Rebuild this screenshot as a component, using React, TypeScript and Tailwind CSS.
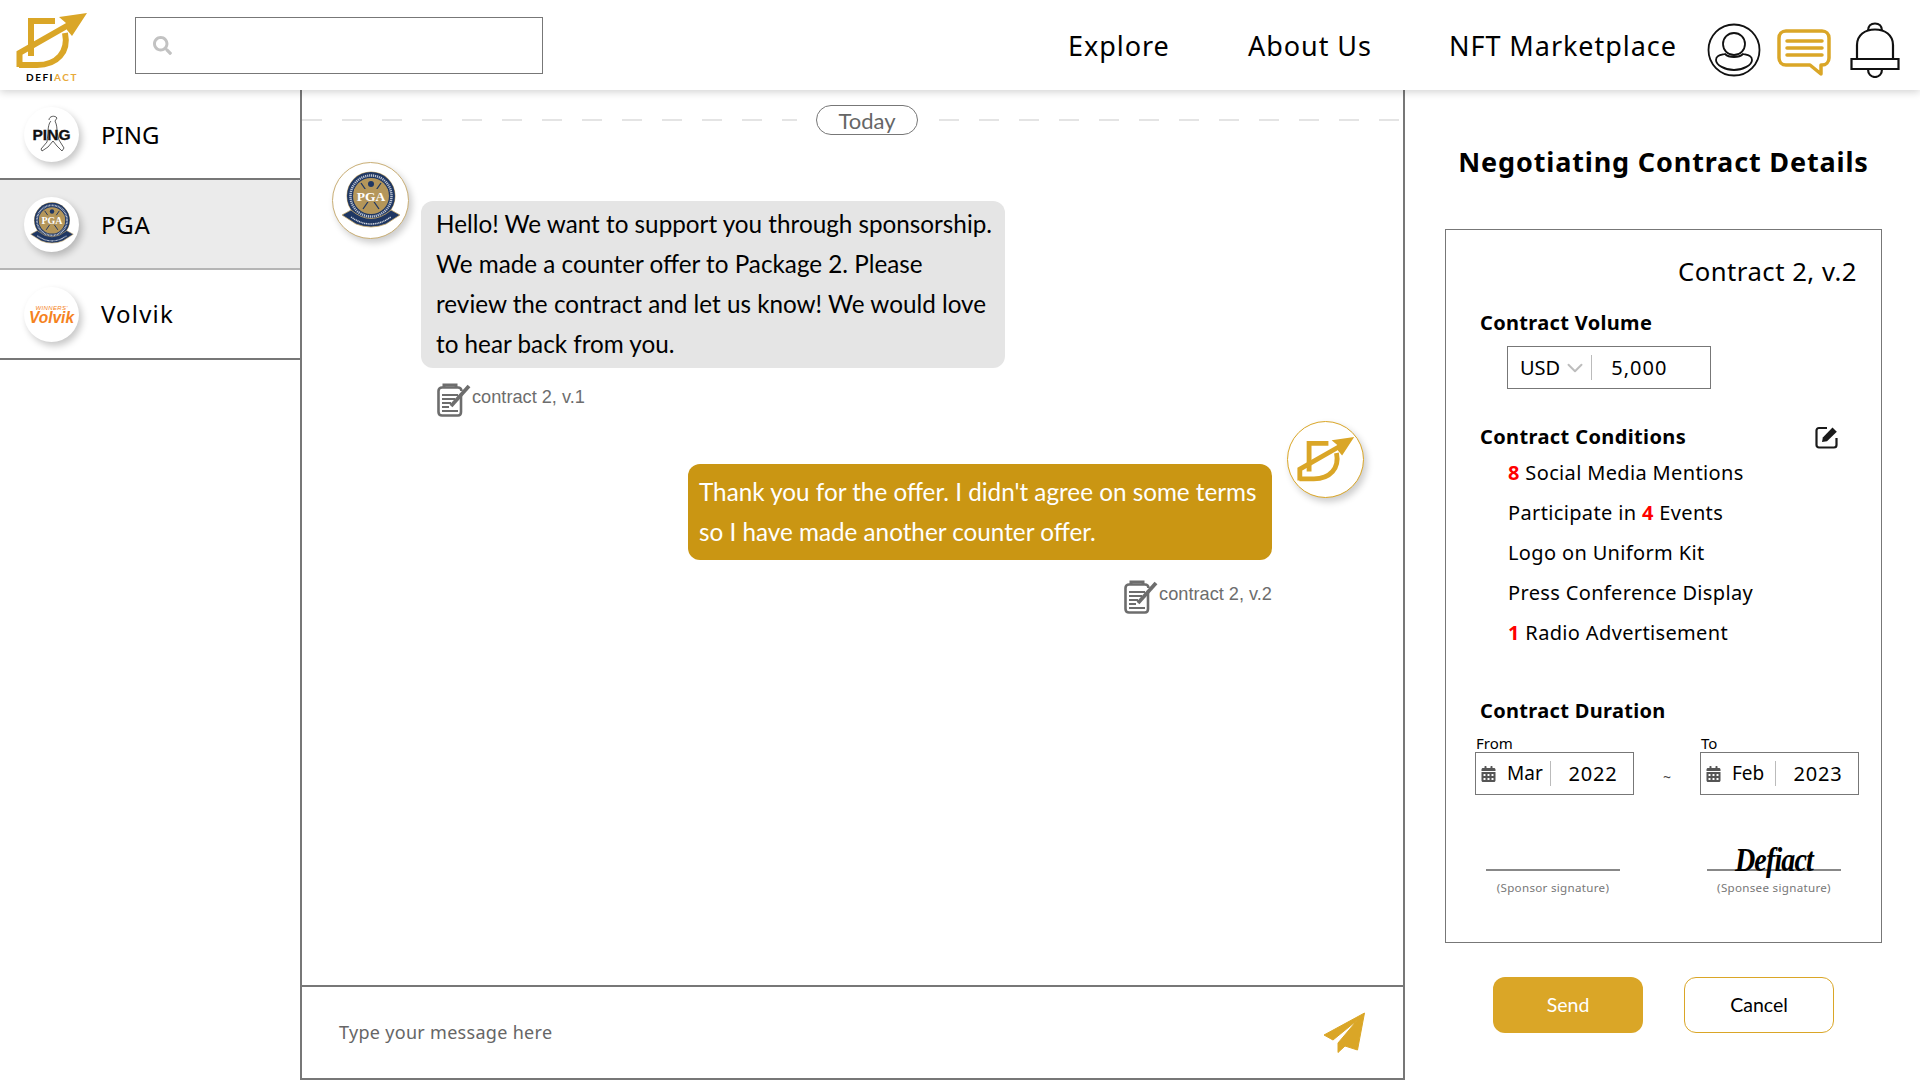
import React from "react";
import { FaSearch, FaCalendarAlt } from "react-icons/fa";
import { ChevronDown } from "lucide-react";

const GOLD = "#daa627";

function LogoMark({ className }: { className?: string }) {
  return (
    <svg viewBox="16 12 72 58" className={className} fill="none">
      <path d="M31 56V21H55" stroke={GOLD} strokeWidth="6" />
      <path d="M65 33C69 52 57 65 37 65H19" stroke={GOLD} strokeWidth="6" />
      <path d="M19.500 67V53L72 23" stroke={GOLD} strokeWidth="6" />
      <path d="M87 13L59 17L66 23L67 30L72 36Z" fill={GOLD} />
    </svg>
  );
}

function PgaBadge({ className }: { className?: string }) {
  return (
    <svg viewBox="0 0 60 60" className={className}>
      <circle cx="30" cy="25" r="24.500" fill="#c6a96b" />
      <circle cx="30" cy="25" r="24" fill="#1f3763" />
      <circle cx="30" cy="25" r="20.500" fill="none" stroke="#fff" strokeWidth="2.500" strokeDasharray="1.200 0.800" opacity="0.700" />
      <circle cx="30" cy="25" r="18" fill="#b4965a" />
      <path d="M20 12L38 38M40 12L22 38" stroke="#1f3763" strokeWidth="1.300" />
      <circle cx="30" cy="13" r="3" fill="#1f3763" />
      <rect x="13" y="18" width="34" height="13" fill="#b4965a" />
      <text x="30" y="29.500" textAnchor="middle" fontFamily="Liberation Serif" fontWeight="700" fontSize="13.500" fill="#fff">PGA</text>
      <path d="M1 44L10 39Q30 56 50 39L59 44L45 53Q30 59 15 53Z" fill="#1f3763" stroke="#c6a96b" strokeWidth="0.800" />
      <path d="M10 46Q30 60 50 46" fill="none" stroke="#fff" strokeWidth="1.500" strokeDasharray="1.200 0.600" opacity="0.800" />
    </svg>
  );
}

function PingLogo() {
  return (
    <svg viewBox="0 0 55 55" className="w-[55px] h-[55px]">
      <path d="M25 13C25 9 31 8 33 11L31 14C33 18 33 22 33 25L35 33L40 41L38 44L33 39L29 34L24 40L18 44L17 42L23 35L24 26C24 20 25 16 27 14" fill="#fff" stroke="#333" strokeWidth="0.800" />
      <text x="27.500" y="32.500" textAnchor="middle" fontFamily="Liberation Sans" fontWeight="700" fontSize="14" textLength="38" lengthAdjust="spacingAndGlyphs" fill="#111" stroke="#111" strokeWidth="0.300">PING</text>
    </svg>
  );
}

function VolvikLogo() {
  return (
    <svg viewBox="0 0 55 55" className="w-[55px] h-[55px]">
      <text x="27.500" y="23" textAnchor="middle" fontFamily="Liberation Sans" fontStyle="italic" fontSize="6" fill="#f58220" textLength="32">WINNERS'</text>
      <text x="27.500" y="36" textAnchor="middle" fontFamily="Liberation Sans" fontStyle="italic" fontWeight="700" fontSize="17" fill="#f58220" textLength="45" lengthAdjust="spacingAndGlyphs">Volvik</text>
    </svg>
  );
}

function ContractIcon() {
  return (
    <svg viewBox="0 0 34 34" className="w-[34px] h-[34px] shrink-0" fill="none" stroke="#6d6d6d">
      <path d="M24 12V29C24 31.500 23 32.500 21 32.500H5C3 32.500 1.500 31.500 1.500 29V8C1.500 6 3 4.500 5 4.500H21C23 4.500 24.500 6 24.500 8" strokeWidth="2.600" />
      <path d="M7 4V2H19V4" strokeWidth="3" />
      <path d="M5 12H21M5 16H18M5 20H14M5 24H12M5 28H21" strokeWidth="1.800" />
      <path d="M14 23L32 3" strokeWidth="3.800" />
    </svg>
  );
}

function EditIcon() {
  return (
    <svg viewBox="0 0 24 24" className="w-[24px] h-[24px]" fill="none">
      <path d="M21.500 13V20C21.500 21.500 20.500 22.500 19 22.500H4C2.500 22.500 1.500 21.500 1.500 20V5.500C1.500 4 2.500 3 4 3H12" stroke="#1a1a1a" strokeWidth="2.200" />
      <path d="M7 17L7.800 12.500L17.500 2.500L21.800 6.800L12 16.300Z" fill="#1a1a1a" />
    </svg>
  );
}

function UserIcon() {
  return (
    <svg viewBox="0 0 54 54" className="w-[54px] h-[54px]" fill="none" stroke="#111" strokeWidth="1.500">
      <circle cx="27" cy="27" r="25.500" strokeWidth="1.800" />
      <circle cx="27" cy="21" r="11" strokeWidth="1.800" />
      <path d="M9 37C9 32 14 32 18 31C22 35 32 35 36 31C40 32 45 32 45 37C45 42 36 47 27 47C18 47 9 42 9 37Z" strokeWidth="1.800" />
    </svg>
  );
}

function ChatIcon() {
  return (
    <svg viewBox="0 0 54 48" className="w-[54px] h-[48px]" fill="none" stroke={GOLD}>
      <path d="M9 2H45C49 2 52 5 52 9V29C52 33 49 36 45 36H44V45L33 36H9C5 36 2 33 2 29V9C2 5 5 2 9 2Z" strokeWidth="3.500" strokeLinejoin="round" />
      <path d="M10 12H45M10 19H45M10 26H45" strokeWidth="3.500" strokeLinecap="round" />
    </svg>
  );
}

function BellIcon() {
  return (
    <svg viewBox="0 0 50 56" className="w-[50px] h-[56px]" fill="none" stroke="#111" strokeWidth="2.200">
      <path d="M18 9C18 4 21 1.500 25 1.500C29 1.500 32 4 32 9" />
      <path d="M7 37V23C7 13 15 7.500 25 7.500C35 7.500 43 13 43 23V37" />
      <path d="M1.500 37H48.500V47H1.500Z" />
      <path d="M18 47C18 52 21 55 25 55C29 55 32 52 32 47" />
    </svg>
  );
}

function SendIcon() {
  return (
    <svg viewBox="0 0 41 41" className="w-[41px] h-[41px]">
      <path d="M40.500 1L33.500 38L21 34L14 40.500V31L33.500 8L9 28L0 23Z" fill={GOLD} stroke={GOLD} strokeWidth="1" strokeLinejoin="round" />
    </svg>
  );
}

function SidebarRow({ name, active, border, nameClass, children }: { name: string; active?: boolean; border: string; nameClass: string; children: React.ReactNode }) {
  return (
    <div className={`h-[90px] flex items-center pl-[24px] border-b-2 ${border} ${active ? "bg-[#ebebeb]" : "bg-white"}`}>
      <div className="w-[55px] h-[55px] rounded-full bg-white flex items-center justify-center shadow-[3px_4px_7px_rgba(0,0,0,0.22)]">{children}</div>
      <span className={`ml-[22px] text-[24px] text-black ${nameClass}`}>{name}</span>
    </div>
  );
}

function Dashes({ className }: { className: string }) {
  return <div className={`h-[2px] bg-[repeating-linear-gradient(90deg,#e4e4e4_0,#e4e4e4_20px,transparent_20px,transparent_40px)] ${className}`} />;
}

function DateBox({ label, month, year }: { label: string; month: string; year: string }) {
  return (
    <div>
      <div className="text-[15px] leading-[18px] text-black pl-[1px]">{label}</div>
      <div className="w-[159px] h-[43px] border border-[#777] flex items-center text-[20px]">
        <FaCalendarAlt className="text-[#555] ml-[5px] w-[15px] h-[16px] shrink-0" />
        <span className="w-[54px] pl-[11px] text-[19px] shrink-0">{month}</span>
        <span className="w-px h-[25px] bg-[#bbb] shrink-0" />
        <span className="flex-1 text-center tracking-[0.8px] pl-[2px]">{year}</span>
      </div>
    </div>
  );
}

function Signature({ label, children }: { label: string; children?: React.ReactNode }) {
  return (
    <div className="w-[134px] flex flex-col items-center">
      <div className="h-[40px] w-full flex items-end justify-center leading-[1] border-b-[2px] border-[#888]">{children}</div>
      <div className="text-[11.600px] text-[#777] mt-[8px] tracking-[0.3px] whitespace-nowrap">{label}</div>
    </div>
  );
}

export default function App() {
  return (
    <div className="w-[1920px] h-[1080px] overflow-hidden bg-white flex flex-col font-['Noto_Sans',sans-serif] text-black">
      <header className="relative z-10 h-[90px] shrink-0 bg-white shadow-[0_2px_8px_rgba(0,0,0,0.18)] flex items-center">
        <div className="w-[135px] pl-[16px] shrink-0 self-start pt-[12px]">
          <LogoMark className="w-[72px] h-[58px]" />
          <div className="w-[72px] text-center text-[10px] leading-[12px] font-bold tracking-[1.5px] mt-[1px] font-['Lato',sans-serif]">
            DEFI<span className="text-[#e8a93a]">ACT</span>
          </div>
        </div>
        <div className="w-[408px] h-[57px] border border-[#777] flex items-center pl-[17px] shrink-0">
          <FaSearch className="text-[#c2c2c2] w-[19px] h-[19px]" />
        </div>
        <nav className="flex items-center ml-[525px] mt-[2px] text-[27px] tracking-[0.95px] whitespace-nowrap">
          <span className="w-[180px]">Explore</span>
          <span className="w-[201px]">About Us</span>
          <span>NFT Marketplace</span>
        </nav>
        <div className="ml-auto flex items-center pr-[20px] mt-[10px]">
          <UserIcon />
          <div className="ml-[16px] mt-[6px]"><ChatIcon /></div>
          <div className="ml-[19px]"><BellIcon /></div>
        </div>
      </header>

      <div className="flex flex-1 min-h-0">
        <aside className="w-[300px] shrink-0">
          <SidebarRow name="PING" border="border-[#777]" nameClass="mt-[2px] tracking-[0px]"><PingLogo /></SidebarRow>
          <SidebarRow name="PGA" active border="border-[#b5b5b5]" nameClass="mt-[2px] tracking-[0.8px]"><PgaBadge className="w-[44px] h-[44px]" /></SidebarRow>
          <SidebarRow name="Volvik" border="border-[#777]" nameClass="mt-[0px] tracking-[1.200px]"><VolvikLogo /></SidebarRow>
        </aside>

        <main className="w-[1105px] shrink-0 border-l-2 border-r-2 border-b-2 border-[#777] flex flex-col">
          <div className="flex-1 relative">
            <div className="flex items-center h-[30px] mt-[15px] overflow-hidden">
              <Dashes className="w-[495px] shrink-0" />
              <div className="ml-[19px] w-[102px] h-[30px] shrink-0 rounded-full border border-[#777] flex items-center justify-center text-[22px] text-[#666] font-['Lato',sans-serif]">Today</div>
              <Dashes className="ml-[21px] flex-1" />
            </div>

            <div className="flex mt-[27px] pl-[30px]">
              <div className="w-[77px] h-[77px] rounded-full bg-white border border-[#c9ae75] flex items-center justify-center shadow-[3px_4px_7px_rgba(0,0,0,0.2)] shrink-0">
                <PgaBadge className="w-[60px] h-[60px]" />
              </div>
              <div className="ml-[12px] mt-[39px]">
                <div className="w-[584px] h-[167px] rounded-[12px] bg-[#e5e5e5] pl-[15px] pt-[3px] text-[24.250px] leading-[40px] font-['Lato',sans-serif] whitespace-nowrap">
                  <div>Hello! We want to support you through sponsorship.</div>
                  <div>We made a counter offer to Package 2. Please</div>
                  <div>review the contract and let us know! We would love</div>
                  <div>to hear back from you.</div>
                </div>
                <div className="flex items-center ml-[16px] mt-[15px] text-[18.200px] text-[#6d6d6d] font-['Liberation_Sans',sans-serif]">
                  <ContractIcon />
                  <span className="ml-[1px] -mt-[5px]">contract 2, v.1</span>
                </div>
              </div>
            </div>

            <div className="flex justify-end pr-[39px] mt-[3px]">
              <div className="flex flex-col items-end mt-[44px]">
                <div className="w-[584px] h-[96px] rounded-[12px] bg-[#ca9613] pl-[11px] pt-[8px] text-[24.250px] leading-[40px] text-white font-['Lato',sans-serif] whitespace-nowrap">
                  <div>Thank you for the offer. I didn't agree on some terms</div>
                  <div>so I have made another counter offer.</div>
                </div>
                <div className="flex items-center mt-[20px] text-[18.200px] text-[#6d6d6d] font-['Liberation_Sans',sans-serif]">
                  <ContractIcon />
                  <span className="ml-[1px] -mt-[5px]">contract 2, v.2</span>
                </div>
              </div>
              <div className="ml-[15px] mt-[1px] w-[77px] h-[77px] rounded-full bg-white border border-[#daa627] flex items-center justify-center shadow-[3px_4px_7px_rgba(0,0,0,0.2)] shrink-0">
                <LogoMark className="w-[58px] h-[47px]" />
              </div>
            </div>
          </div>

          <div className="h-[93px] shrink-0 border-t-2 border-[#777] flex items-center pl-[37px] pr-[38px]">
            <span className="text-[18px] text-[#666] tracking-[0.3px]">Type your message here</span>
            <div className="ml-auto"><SendIcon /></div>
          </div>
        </main>

        <section className="flex-1 flex flex-col items-center pl-[2px]">
          <h1 className="mt-[52px] text-[27px] leading-[40px] font-bold tracking-[0.85px] whitespace-nowrap">Negotiating Contract Details</h1>
          <div className="mt-[47px] w-[437px] h-[714px] border border-[#777]">
            <div className="text-right pr-[24px] mt-[24px] text-[25.700px] leading-[36px] tracking-[0.5px]">Contract 2, v.2</div>
            <div className="pl-[34px] mt-[19px] text-[20px] leading-[28px] font-bold tracking-[0.33px]">Contract Volume</div>
            <div className="ml-[61px] mt-[9px] w-[204px] h-[43px] border border-[#777] flex items-center text-[20px]">
              <span className="ml-[12px]">USD</span>
              <ChevronDown className="w-[26px] h-[26px] text-[#bdbdbd] ml-[2px]" strokeWidth={1.800} />
              <span className="w-px h-[25px] bg-[#bbb] ml-[3px]" />
              <span className="ml-[19px] tracking-[1px]">5,000</span>
            </div>
            <div className="pl-[34px] pr-[42px] mt-[34px] flex items-center justify-between">
              <span className="text-[20px] leading-[28px] font-bold tracking-[0.38px]">Contract Conditions</span>
              <EditIcon />
            </div>
            <div className="ml-[62px] mt-[2px] text-[20px] leading-[40px] tracking-[0.35px] whitespace-nowrap">
              <div><span className="text-[#f00] font-bold">8</span> Social Media Mentions</div>
              <div>Participate in <span className="text-[#f00] font-bold">4</span> Events</div>
              <div>Logo on Uniform Kit</div>
              <div>Press Conference Display</div>
              <div><span className="text-[#f00] font-bold">1</span> Radio Advertisement</div>
            </div>
            <div className="pl-[34px] mt-[44px] text-[20px] leading-[28px] font-bold tracking-[0.33px]">Contract Duration</div>
            <div className="flex items-end pl-[29px] mt-[9px]">
              <DateBox label="From" month="Mar" year="2022" />
              <span className="w-[66px] text-center text-[14px] pb-[8px] text-[#444]">~</span>
              <DateBox label="To" month="Feb" year="2023" />
            </div>
            <div className="flex pl-[40px] gap-[87px] mt-[36px]">
              <Signature label="(Sponsor signature)" />
              <Signature label="(Sponsee signature)">
                <span className="text-[33px] font-bold font-['Liberation_Serif',serif] italic -mb-[8px] tracking-[-1px] scale-x-[0.85]">Defiact</span>
              </Signature>
            </div>
          </div>
          <div className="flex gap-[41px] mt-[34px]">
            <button className="w-[150px] h-[56px] rounded-[12px] bg-[#daa627] text-white text-[19.500px] pb-[1px] font-['Lato',sans-serif]">Send</button>
            <button className="w-[150px] h-[56px] rounded-[12px] bg-white border border-[#daa627] text-black text-[19.500px] pb-[1px] font-['Lato',sans-serif]">Cancel</button>
          </div>
        </section>
      </div>
    </div>
  );
}
